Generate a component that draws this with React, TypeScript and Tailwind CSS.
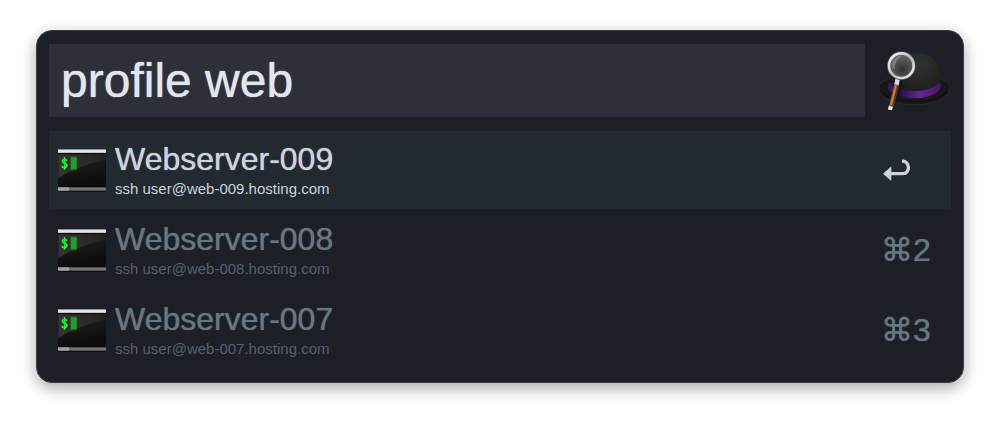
import React, { useState } from 'react';

type Profile = {
    id: number;
    name: string;
    command: string;
};

const profiles: Profile[] = [
    { id: 9, name: 'Webserver-009', command: 'ssh user@web-009.hosting.com' },
    { id: 8, name: 'Webserver-008', command: 'ssh user@web-008.hosting.com' },
    { id: 7, name: 'Webserver-007', command: 'ssh user@web-007.hosting.com' },
];

// Shared gradients, defined once and used by every terminal icon
const IconDefs: React.FC = () => (
    <svg className="absolute h-0 w-0" aria-hidden="true">
        <defs>
            <linearGradient id="term-bar" x1="0" y1="0" x2="0" y2="1">
                <stop offset="0" stopColor="#d2d0d0" />
                <stop offset="0.5" stopColor="#f0eeee" />
                <stop offset="1" stopColor="#b9b7b7" />
            </linearGradient>
            <linearGradient id="term-screen" x1="0" y1="0" x2="0.3" y2="1">
                <stop offset="0" stopColor="#242424" />
                <stop offset="1" stopColor="#0c0c0c" />
            </linearGradient>
            <linearGradient id="term-shine" x1="0" y1="0" x2="1" y2="0">
                <stop offset="0" stopColor="#343434" />
                <stop offset="1" stopColor="#222222" />
            </linearGradient>
        </defs>
    </svg>
);

const TerminalIcon: React.FC<{ className?: string }> = ({ className }) => (
    <svg viewBox="0 0 144 132" className={className} aria-hidden="true">
        <rect x="0" y="3" width="144" height="128" fill="#090909" />
        <rect x="0" y="4" width="144" height="11" fill="url(#term-bar)" />
        <rect x="1" y="19" width="142" height="97" fill="url(#term-screen)" />
        <path d="M1 19H143V36C92 45 42 64 1 91Z" fill="url(#term-shine)" />
        <rect x="0" y="118" width="144" height="10" fill="#777372" />
        <rect x="0" y="118" width="33" height="10" fill="#a5a2a1" />
        <path
            d="M27 38C23 33 13 33 13 40C13 47 27 45 27 52C27 60 16 61 11 55M20 28V65"
            fill="none"
            stroke="#2bf03a"
            strokeWidth="5"
        />
        <rect x="36" y="25" width="22" height="42" fill="#20c42c" opacity="0.25" />
        <rect x="39" y="28" width="17" height="36" fill="#1f9f28" />
    </svg>
);

const HatIcon: React.FC<{ className?: string }> = ({ className }) => (
    <svg viewBox="27 33 216 183" className={className} aria-hidden="true">
        <defs>
            <radialGradient id="hat-crown" cx="0.6" cy="0.25" r="0.75">
                <stop offset="0" stopColor="#323330" />
                <stop offset="1" stopColor="#181918" />
            </radialGradient>
            <linearGradient id="hat-band" x1="0" y1="0" x2="1" y2="0">
                <stop offset="0" stopColor="#4b1779" />
                <stop offset="0.25" stopColor="#29104a" />
                <stop offset="0.6" stopColor="#6a2696" />
                <stop offset="1" stopColor="#431565" />
            </linearGradient>
            <linearGradient id="lens-ring" x1="0" y1="0" x2="1" y2="1">
                <stop offset="0" stopColor="#ffffff" />
                <stop offset="0.5" stopColor="#b9b9b9" />
                <stop offset="1" stopColor="#f2f2f2" />
            </linearGradient>
            <radialGradient id="lens-glass" cx="0.55" cy="0.65" r="0.6">
                <stop offset="0" stopColor="#303030" />
                <stop offset="1" stopColor="#66686a" />
            </radialGradient>
        </defs>
        <path
            d="M27 148C27 131 43 122 62 120L208 120C228 124 240 134 240 147C240 176 194 197 134 197C72 197 27 178 27 148Z"
            fill="#171816"
            stroke="#34342f"
            strokeWidth="2"
        />
        <path d="M38 158C50 177 84 187 134 187C184 187 220 175 231 158" fill="none" stroke="#0f100f" strokeWidth="4" />
        <path
            d="M56 150C56 92 88 44 148 43C196 43 212 82 211 145C200 166 158 174 126 174C94 174 66 166 56 150Z"
            fill="url(#hat-crown)"
        />
        <path
            d="M56 130C78 152 104 156 132 156C165 156 196 147 210 128L212 149C196 170 158 178 130 178C98 178 68 168 55 151Z"
            fill="url(#hat-band)"
        />
        <path d="M98 126L88 172L72 168L78 128Z" fill="#120b1c" opacity="0.7" />
        <path d="M73 136L87 139L71 202L57 200Z" fill="#8c5a2a" />
        <path d="M78 139L63 198" stroke="#c98a4b" strokeWidth="4" />
        <path d="M84 139L69 200" stroke="#4b2910" strokeWidth="3" />
        <path d="M77 116L90 119L86 139L73 136Z" fill="#dadada" />
        <path d="M56 200L69 203L66 214L54 212Z" fill="#e6e6e6" />
        <circle cx="94" cy="80" r="43" fill="#4b4b4b" />
        <circle cx="94" cy="80" r="37" fill="url(#lens-glass)" stroke="url(#lens-ring)" strokeWidth="8" />
        <path d="M68 88C63 68 76 51 96 50C82 59 74 70 74 91Z" fill="#a6a9ab" opacity="0.5" />
    </svg>
);

const ReturnIcon: React.FC<{ className?: string }> = ({ className }) => (
    <svg viewBox="0 0 84 66" className={className} aria-hidden="true">
        <path d="M20 44H60C82 44 82 6 57 6" fill="none" stroke="currentColor" strokeWidth="10" />
        <path d="M0 44L25 22V66Z" fill="currentColor" />
    </svg>
);

const ResultRow: React.FC<{
    profile: Profile;
    position: number;
    isActive: boolean;
    onSelect: () => void;
}> = ({ profile, position, isActive, onSelect }) => (
    <button
        type="button"
        onClick={onSelect}
        className={`flex w-full items-center gap-[9px] py-2.5 pl-[9px] text-left text-shadow-[0_0_1px_currentColor] ${
            isActive ? 'bg-[#222930] text-[#cdd2de]' : 'text-[#687680]'
        }`}
    >
        <TerminalIcon className="h-11 w-12 shrink-0" />
        <span className="min-w-0 flex-1">
            <span className="block truncate text-[32px] leading-9">{profile.name}</span>
            <span
                className={`mt-0.5 block truncate text-[15px] leading-5 text-shadow-none ${
                    isActive ? '' : 'text-[#56616a]'
                }`}
            >
                {profile.command}
            </span>
        </span>
        <span className="w-[70px] shrink-0 text-[32px] leading-9">
            {isActive ? <ReturnIcon className="ml-0.5 h-6 w-7" /> : `⌘${position}`}
        </span>
    </button>
);

const App: React.FC = () => {
    const [query, setQuery] = useState('profile web');
    const [activeId, setActiveId] = useState(9);

    return (
        <main className="bg-white px-9 pt-[30px] pb-10 font-['Liberation_Sans',Arial,sans-serif]">
            <IconDefs />
            <div className="rounded-2xl border border-[#3a3d42] bg-[#1d1f27] px-3 pt-[13px] pb-[13px] shadow-[0_5px_16px_rgba(0,0,0,0.35)]">
                <div className="flex items-center gap-3.5">
                    <input
                        type="text"
                        aria-label="Search"
                        value={query}
                        onChange={e => setQuery(e.target.value)}
                        className="h-[73px] min-w-0 flex-1 bg-[#2d303a] px-3 text-[48px] text-[#e3e5ee] outline-none text-shadow-[0_0_1px_currentColor]"
                    />
                    <HatIcon className="h-[61px] w-18 shrink-0" />
                </div>
                <ul className="mt-3.5 flex flex-col gap-0.5">
                    {profiles.map((profile, index) => (
                        <li key={profile.id}>
                            <ResultRow
                                profile={profile}
                                position={index + 1}
                                isActive={profile.id === activeId}
                                onSelect={() => setActiveId(profile.id)}
                            />
                        </li>
                    ))}
                </ul>
            </div>
        </main>
    );
};

export default App;
